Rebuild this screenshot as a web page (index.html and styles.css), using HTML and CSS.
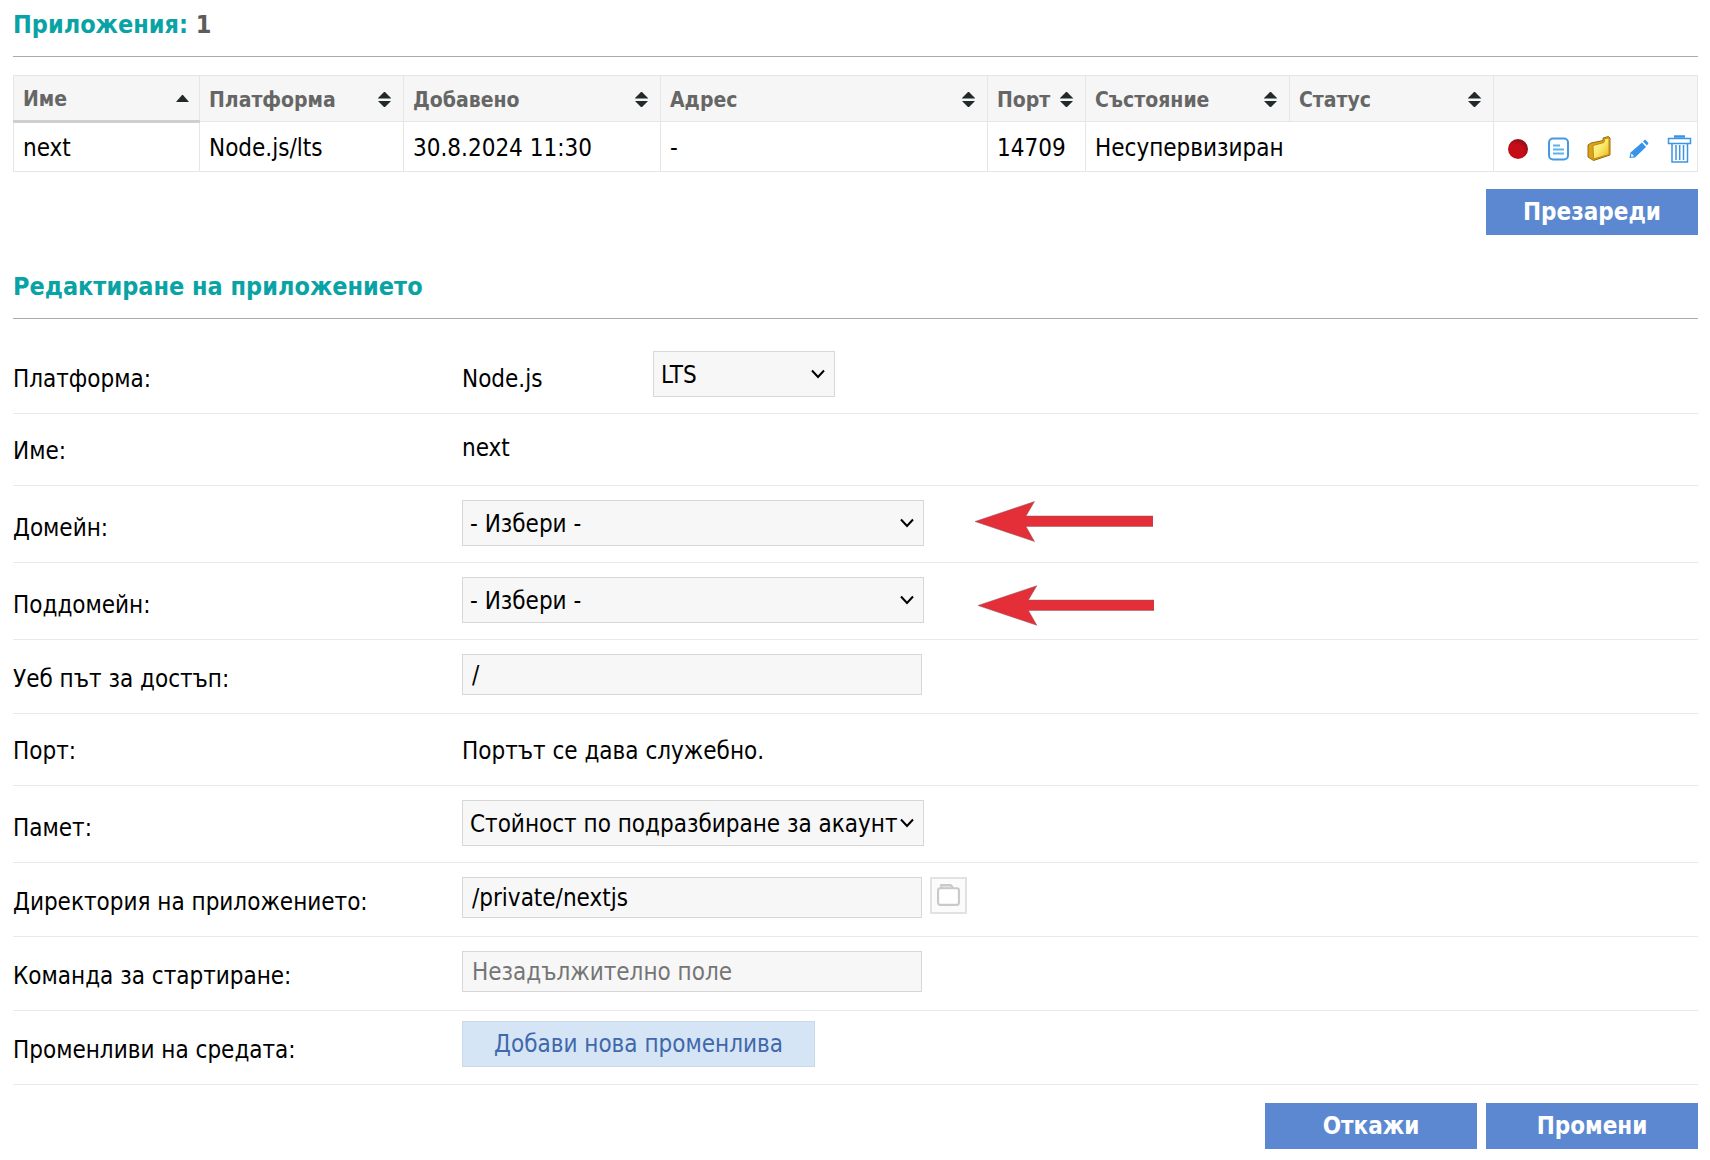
FILE: index.html
```html
<!DOCTYPE html>
<html lang="bg">
<head>
<meta charset="utf-8">
<meta name="viewport" content="width=device-width, initial-scale=1">
<title>Приложения</title>
<link rel="stylesheet" href="styles.css">
</head>
<body>
<svg class="sprite" aria-hidden="true">
  <symbol id="sort" viewBox="0 0 13 15"><path d="M6 0h1l6 6H0zM0 9h13l-6 6H6z" fill="#22292b"/><path d="M0 6.500h13" stroke="#8b9091"/></symbol>
  <symbol id="sort-up" viewBox="0 0 13 15"><path d="M6 3h1l6 7H0z" fill="#22292b"/></symbol>
  <symbol id="arrow" viewBox="0 0 178 41"><path d="M0 20.500 59.500.5 51 15h127v10.500H51l8.500 15z" fill="#e42e38" stroke="#8a5a60" stroke-width=".5"/></symbol>
</svg>
<main class="page">
  <section>
    <h2 class="title">Приложения: <span class="count">1</span></h2>
    <table class="apps">
      <colgroup><col class="c-name"><col class="c-mid"><col class="c-date"><col><col class="c-port"><col class="c-mid"><col class="c-mid"><col class="c-mid"></colgroup>
      <thead>
        <tr>
          <th class="sorted" scope="col"><span class="head">Име <svg class="sort"><use href="#sort-up"/></svg></span></th>
          <th scope="col"><span class="head">Платформа <svg class="sort"><use href="#sort"/></svg></span></th>
          <th scope="col"><span class="head">Добавено <svg class="sort"><use href="#sort"/></svg></span></th>
          <th scope="col"><span class="head">Адрес <svg class="sort"><use href="#sort"/></svg></span></th>
          <th scope="col"><span class="head">Порт <svg class="sort"><use href="#sort"/></svg></span></th>
          <th scope="col"><span class="head">Състояние <svg class="sort"><use href="#sort"/></svg></span></th>
          <th scope="col"><span class="head">Статус <svg class="sort"><use href="#sort"/></svg></span></th>
          <td></td>
        </tr>
      </thead>
      <tbody>
        <tr>
          <td>next</td><td>Node.js/lts</td><td>30.8.2024 11:30</td><td>-</td><td>14709</td><td colspan="2">Несупервизиран</td>
          <td class="actions-cell">
            <div class="actions">
              <button type="button" class="icon" aria-label="Стартиране"><svg viewBox="0 0 28 28"><defs><radialGradient id="red" cx=".4" cy=".65" r=".65"><stop offset=".6" stop-color="#c50d17"/><stop offset="1" stop-color="#8c1016"/></radialGradient></defs><circle cx="14" cy="14" r="10" fill="url(#red)"/></svg></button>
              <button type="button" class="icon" aria-label="Логове"><svg viewBox="0 0 28 28" fill="none" stroke="#4299e6" stroke-width="2"><rect x="5" y="3.500" width="19" height="21" rx="4"/><path d="M9 10.500h7M9 14.500h11M9 18.500h11" stroke="#58b4ee"/></svg></button>
              <button type="button" class="icon" aria-label="Файлове"><svg viewBox="0 0 28 28"><defs><linearGradient id="gold" x1="0" y1="0" x2="1" y2="1"><stop offset="0" stop-color="#fffbc0"/><stop offset=".5" stop-color="#fbe96a"/><stop offset="1" stop-color="#e8b416"/></linearGradient></defs><path d="M3 10 6 8l12-2.500V3l5.500-1.500L25 3v17L8.500 25.500 3 22z" fill="#d9a417" stroke="#9a6d10"/><path d="M8 10.500 19 7.500l1-4 4-.5v16.500L8.500 24z" fill="url(#gold)" stroke="#c48a12"/></svg></button>
              <button type="button" class="icon" aria-label="Редактиране"><svg viewBox="0 0 28 28"><path d="m4.500 23 1-5.500L17 7.500l4 4.500L10 22.500z" fill="#3692ea"/><path d="m18 6.500 2-2L23.500 8l-1.500 2.500z" fill="#3692ea"/><path d="M6.500 18.500 9 21.300l-3 .5z" fill="#fff"/></svg></button>
              <button type="button" class="icon" aria-label="Изтриване"><svg viewBox="0 0 28 28" fill="none" stroke="#3d94e4" stroke-width="1.500"><path d="M9 1.500h11" stroke-width="2.500"/><path d="M3.500 3.500h22v5h-22zM7 8.500h15.500v18.500H7z"/><path d="M11 10v15M14.700 10v15M18.500 10v15"/></svg></button>
            </div>
          </td>
        </tr>
      </tbody>
    </table>
    <div class="buttons reload"><button type="button" class="btn">Презареди</button></div>
  </section>
  <form class="editor">
    <h2 class="title">Редактиране на приложението</h2>
    <div class="row first">
      <label class="label" for="version">Платформа:</label>
      <div class="field"><span class="text platform raised">Node.js</span><select class="control select short" id="version"><option>LTS</option></select></div>
    </div>
    <div class="row text-row"><span class="label">Име:</span><div class="field"><span class="text raised">next</span></div></div>
    <div class="row"><label class="label" for="domain">Домейн:</label><div class="field"><select class="control select" id="domain"><option>- Избери -</option></select></div><svg class="arrow"><use href="#arrow"/></svg></div>
    <div class="row"><label class="label" for="subdomain">Поддомейн:</label><div class="field"><select class="control select" id="subdomain"><option>- Избери -</option></select></div><svg class="arrow lower"><use href="#arrow"/></svg></div>
    <div class="row"><label class="label" for="path">Уеб път за достъп:</label><div class="field"><input class="control input" id="path" type="text" value="/"></div></div>
    <div class="row text-row"><span class="label">Порт:</span><div class="field"><span class="text">Портът се дава служебно.</span></div></div>
    <div class="row"><label class="label" for="memory">Памет:</label><div class="field"><select class="control select" id="memory"><option>Стойност по подразбиране за акаунт</option></select></div></div>
    <div class="row"><label class="label" for="dir">Директория на приложението:</label><div class="field"><input class="control input" id="dir" type="text" value="/private/nextjs"><button type="button" class="browse" aria-label="Избор на директория"><svg viewBox="0 0 24 24" fill="#fff" stroke="#c9c9c9" stroke-width="2"><path d="M5 5V2h9l2 2v1" fill="#e8e8e8"/><rect x="2" y="5" width="20" height="16" rx="2"/></svg></button></div></div>
    <div class="row"><label class="label" for="command">Команда за стартиране:</label><div class="field"><input class="control input" id="command" type="text" placeholder="Незадължително поле"></div></div>
    <div class="row"><span class="label">Променливи на средата:</span><div class="field add-field"><button type="button" class="add">Добави нова променлива</button></div></div>
    <div class="buttons"><button type="button" class="btn">Откажи</button><button type="submit" class="btn">Промени</button></div>
  </form>
</main>
</body>
</html>
```
FILE: styles.css
```css
* { box-sizing: border-box; }

body,
button,
input,
select {
  font-family: "DejaVu Sans Condensed", "Noto Sans", sans-serif;
  font-size: 24px;
  line-height: 30px;
}

body { margin: 0; color: #000; background: #fff; }

.sprite { display: none; }

.page { padding: 8px 12px 12px 13px; }

.title {
  margin: 0 0 18px;
  padding: 2px 0 16px;
  border-bottom: 1px solid #ababab;
  color: #0aa3a5;
  font-size: 25px;
  line-height: 30px;
}

.count { color: #5c5c5c; }

.apps { width: 100%; table-layout: fixed; border-collapse: collapse; }
.c-name { width: 186px; }
.c-mid { width: 204px; }
.c-date { width: 257px; }
.c-port { width: 98px; }

.apps th,
.apps td { padding: 2px 0 0 9px; border: 1px solid #e6e6e6; text-align: left; }
.apps thead tr { height: 46px; background: #f6f6f6; }
.apps tbody tr { height: 50px; }
.apps th { color: #666; font-size: 21px; }
.apps th.sorted { border-bottom: 3px solid #cfcfcf; }

.head { display: flex; align-items: center; justify-content: space-between; padding-right: 12px; }
.sorted .head { padding-right: 10px; }
.sort { flex: none; width: 13px; height: 15px; }

.apps .actions-cell { padding: 5px 4px 0 10px; }
.actions { display: flex; justify-content: space-between; }
.icon { width: 28px; height: 28px; padding: 0; border: 0; background: none; }
.icon svg { display: block; width: 28px; height: 28px; }

.buttons { display: flex; justify-content: flex-end; gap: 9px; padding-top: 18px; }
.reload { padding-top: 17px; }
.btn { width: 212px; height: 46px; padding: 0; border: 0; background: #5b88d0; color: #fff; font-weight: bold; }

.editor { margin-top: 35px; }
.editor .title { margin-bottom: 0; }

.row {
  position: relative;
  display: grid;
  grid-template-columns: 449px 1fr;
  border-bottom: 1px solid #e9e9e9;
}
.first { padding-top: 18px; }
.label { align-self: end; padding-bottom: 19px; }
.field { display: flex; padding: 14px 0 16px; }
.text-row .field { padding: 19px 0; }
.text-row { min-height: 72px; }
.text { align-self: end; }
.raised { margin-bottom: 3px; }
.platform { width: 191px; }

.control { width: 462px; height: 46px; border: 1px solid #d7d7d7; border-radius: 0; background-color: #f7f7f7; color: #000; }
.select {
  appearance: none;
  padding: 2px 24px 0 7px;
  background-image: url("data:image/svg+xml,%3Csvg xmlns='http://www.w3.org/2000/svg' width='14' height='10' viewBox='0 0 14 10'%3E%3Cpath d='M1 1.500l6 6.500 6-6.500' fill='none' stroke='%23000' stroke-width='2'/%3E%3C/svg%3E");
  background-repeat: no-repeat;
  background-position: right 9px center;
}
.short { width: 182px; }
.input { width: 460px; height: 41px; padding: 0 9px; margin-bottom: 2px; }
.input::placeholder { color: #757575; opacity: 1; }

.browse { width: 37px; height: 37px; margin-left: 8px; padding: 4px; border: 2px solid #e2e2e2; background: #fbfbfb; }
.browse svg { display: block; width: 25px; height: 25px; }

.add-field { padding: 10px 0 17px; }
.add { width: 353px; height: 46px; padding: 0; border: 1px solid #c8dae8; background: #d5e5f6; color: #4068aa; }

.arrow { position: absolute; top: 15px; left: 962px; width: 178px; height: 41px; }
.lower { top: 22px; left: 965px; width: 176px; }
```
